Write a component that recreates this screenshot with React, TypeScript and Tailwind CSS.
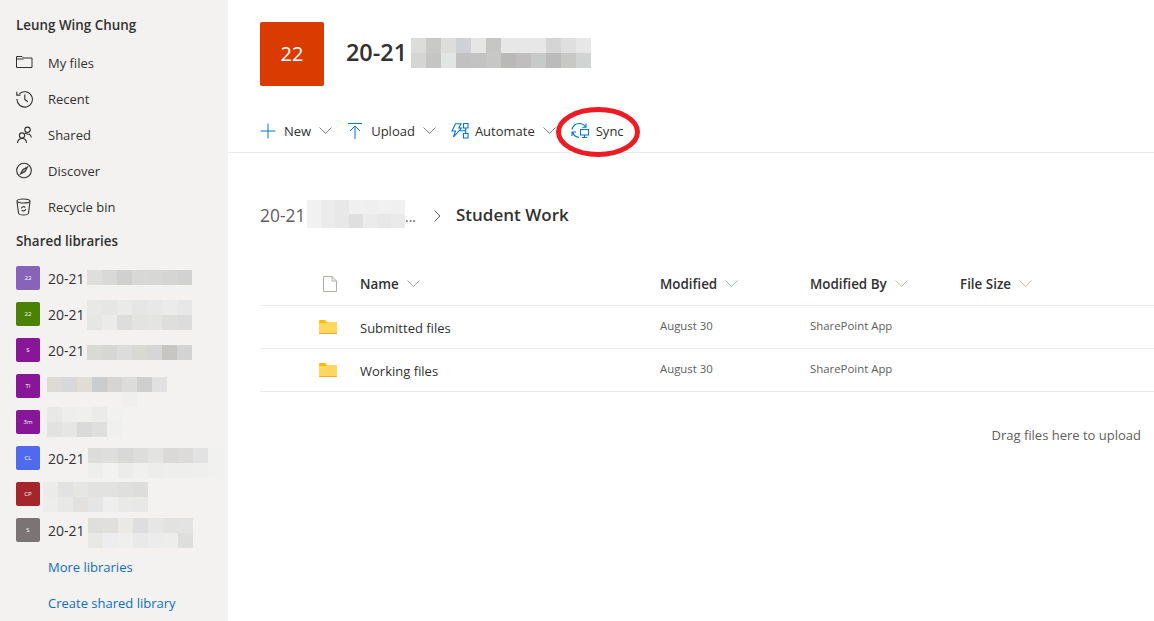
import React from "react";

function Mosaic({ rows, cell = "w-[15px] h-[15px]", className = "" }: { rows: (string | null)[][]; cell?: string; className?: string }) {
  return (
    <div className={"flex flex-col shrink-0 " + className}>
      {rows.map((r, i) => (
        <div key={i} className="flex">
          {r.map((c, j) => (
            <div key={j} className={cell} style={{ backgroundColor: c ?? "transparent" }} />
          ))}
        </div>
      ))}
    </div>
  );
}

const Chevron = ({ className = "" }: { className?: string }) => (
  <svg viewBox="0 0 13 7" className={"w-[13px] h-[7px] shrink-0 " + className} fill="none" stroke="currentColor" strokeWidth="1">
    <path d="M.5.5l6 6 6-6" />
  </svg>
);

const navIcon = "w-[18px] h-[18px] shrink-0 text-[#323130]";
const FolderOutline = () => (
  <svg viewBox="0 0 18 18" className={navIcon} fill="none" stroke="currentColor" strokeWidth="1">
    <path d="M.5 2.500v11h15.500v-9.500H7.500L6 2.500H.5zM.5 5h7" />
  </svg>
);
const Recent = () => (
  <svg viewBox="0 0 18 18" className={navIcon} fill="none" stroke="currentColor" strokeWidth="1.1">
    <path d="M3.400 3.800A7.700 7.700 0 1 1 1 9M.8 1.800v3.300h3.700M8.800 4.500v4.900l3 2.400" />
  </svg>
);
const Shared = () => (
  <svg viewBox="0 0 18 18" className={navIcon} fill="none" stroke="currentColor" strokeWidth="1.1">
    <circle cx="11.500" cy="3.800" r="2.700" />
    <circle cx="6" cy="9.500" r="2.600" />
    <path d="M1.500 17c0-2.700 2-4.500 4.500-4.500s4.500 1.800 4.500 4.500M8.800 6.800c.7.800 1.700 1.200 2.700 1.200 2 0 3.500 1.400 3.800 3.500" />
  </svg>
);
const Discover = () => (
  <svg viewBox="0 0 18 18" className={navIcon} fill="none" stroke="currentColor" strokeWidth="1.1">
    <circle cx="8" cy="8.500" r="7.300" />
    <path d="M11.500 5L9 9.600 4.500 12l2.500-4.600z" fill="currentColor" fillOpacity="0.35" />
  </svg>
);
const Bin = () => (
  <svg viewBox="0 0 18 18" className={navIcon} fill="none" stroke="currentColor" strokeWidth="1.1">
    <ellipse cx="7.500" cy="3" rx="6.500" ry="2" />
    <path d="M1 3.500l1.500 11.500c.2 1.200 1.500 2 5 2s4.800-.8 5-2L14 3.500M5.300 10.500a2.300 2.300 0 0 1 4-1M9.700 11a2.300 2.300 0 0 1-4 1.200" />
  </svg>
);

const blue = "text-[#0078d4]";
const Plus = () => (
  <svg viewBox="0 0 16 16" className={"w-4 h-4 shrink-0 " + blue} fill="none" stroke="currentColor" strokeWidth="1">
    <path d="M8 .5v15M.5 8h15" />
  </svg>
);
const UploadIcon = () => (
  <svg viewBox="0 0 14 16" className={"w-[14px] h-4 shrink-0 " + blue} fill="none" stroke="currentColor" strokeWidth="1">
    <path d="M0 .5h14M7 3v13M2 8l5-5 5 5" />
  </svg>
);
const AutomateIcon = () => (
  <svg viewBox="0 0 18 16" className={"w-[18px] h-4 shrink-0 " + blue} fill="none" stroke="currentColor" strokeWidth="1.1">
    <path d="M4.500.8h5.500L7.800 5H10.500L2.500 14 4.500 8H1zM12.500.5h4.500v4.500h-4.500zM12.500 10.500h4.500v4.500h-4.500zM14.700 5v5.500M8.500 7.700h6" />
  </svg>
);
const SyncIcon = () => (
  <svg viewBox="0 0 18 17" className={"w-[18px] h-[17px] shrink-0 " + blue} fill="none" stroke="currentColor" strokeWidth="1.1">
    <path d="M1 7.500C2 3.500 5 1.500 8.500 1.500c2.700 0 4.800 1.200 6 3.500M15 1.500v3.800h-3.800M1.500 10c.9 3 3.500 5 6.500 5.300M1 14v-4h4" />
    <path d="M9.500 7.500h8v5.500h-8zM13.500 13v2.300M11 15.500h5" />
  </svg>
);

const FolderIcon = () => (
  <svg viewBox="0 0 18 14" className="w-[18px] h-[14px] shrink-0 -mt-[2px]">
    <path d="M0 1a1 1 0 0 1 1-1h5l2 2h9a1 1 0 0 1 1 1v10H0z" fill="#ffb900" />
    <path d="M0 3h7l2-1h8a1 1 0 0 1 1 1v11H0z" fill="#ffd75e" />
    <path d="M0 13h18v1H0z" fill="#f2a93b" />
  </svg>
);
const FileIcon = () => (
  <svg viewBox="0 0 14 16" className="w-[14px] h-4 shrink-0" fill="#fff" stroke="#a9b1a6" strokeWidth="1">
    <path d="M.5.500h8.500l4.500 4.500v10.500H.5zM9 .5V5h4.500" />
  </svg>
);

const NavItem = ({ icon, label }: { icon: React.ReactNode; label: string }) => (
  <div className="flex items-center pl-4 h-9">
    <span className="w-8 flex shrink-0">{icon}</span>
    <span className="text-[13px] text-[#323130] pt-[2px]">{label}</span>
  </div>
);

const libs: { color: string; tile: string; prefix: boolean; mos: string; rows: (string | null)[][] }[] = [
  { color: "bg-[#8764b8]", tile: "22", prefix: true, mos: "mt-[10px]", rows: [["#dededc", "#d9d9d7", "#d0d0d0", "#d8d8d6", "#d7d7d5", "#d5d5d4", "#d2d2d2"]] },
  { color: "bg-[#498205]", tile: "22", prefix: true, mos: "mt-[4px]", rows: [["#e8e8e7", "#e6e6e4", "#eaeae9", "#e6e6e6", "#e8e8e8", "#ebebeb", "#e7e7e8"], ["#e6e6e5", "#ebebea", "#dddddd", "#e3e3e2", "#e4e4e3", "#dededd", "#dcdcdc"]] },
  { color: "bg-[#881798]", tile: "S", prefix: true, mos: "mt-[13px]", rows: [["#d9d9d6", "#d6d6d5", "#dcdcdd", "#d8d8d5", "#d7d6d6", "#c7c6c3", "#d3d3d3"]] },
  { color: "bg-[#881798]", tile: "TI", prefix: false, mos: "ml-[-1px] mt-[9px]", rows: [["#dddad7", "#d8d8da", "#e0ddd8", "#cbccce", "#d6d5d3", "#dcdcda", "#cfcfcf", "#e1e1e1"], [null, null, null, null, null, "#efefee", null, null]] },
  { color: "bg-[#881798]", tile: "3m", prefix: false, mos: "ml-[-1px] mt-[3px]", rows: [["#e8e8e7", "#eeeeed", "#efefee", "#ebebea", "#f1f1f0"], ["#e2e2e1", "#e6e6e5", "#dadadb", "#dfdfdd", "#f0f0ef"]] },
  { color: "bg-[#4f6bed]", tile: "CL", prefix: true, mos: "ml-[1px] mt-[8px]", rows: [["#dcdcda", "#dededc", "#d8d8d8", "#dddddb", "#e3e3e2", "#dad9d8", "#dcdbd9", "#e2e2e2", "#f1f1f0"], ["#eeeeed", "#f2f2f1", "#ececeb", "#f0f0ef", "#ededec", "#eeeeed", "#eeeeed", "#efefee", "#f1f1f0"]] },
  { color: "bg-[#a4262c]", tile: "CP", prefix: false, mos: "ml-[-5px] mt-[6px]", rows: [["#ebebea", "#e3e2e2", "#e6e6e5", "#e2e2e1", "#e2e2e1", "#dfdfde", "#dddddc"], ["#ededec", "#e8e8e7", "#e2e1e0", "#e5e5e6", "#eeeeee", "#e9e9e8", "#e8e8e8"]] },
  { color: "bg-[#7a7574]", tile: "S", prefix: true, mos: "ml-[1px] mt-[6px]", rows: [["#dededc", "#e0dfdd", "#ebe9e6", "#dedee0", "#e6e6e6", "#e2e2e1", "#e3e3e4"], ["#e8e8e7", "#edecee", "#efefee", "#e9e9ea", "#ececec", "#ededec", "#dededd"]] },
];

const Lib = ({ l }: { l: (typeof libs)[number] }) => (
  <div className="flex h-9 pl-4 items-start">
    <div className={"w-6 h-6 mt-[6px] rounded-[2px] flex items-center justify-center text-white text-[6px] shrink-0 " + l.color}>{l.tile}</div>
    <div className="w-2 shrink-0" />
    {l.prefix && <span className="w-[39px] shrink-0 text-[14px] leading-[38px] text-[#323130]">20-21</span>}
    <Mosaic rows={l.rows} className={l.mos} />
  </div>
);

const HeaderCell = ({ label, cls, chevronCls = "text-[#a6a6a6]" }: { label: string; cls: string; chevronCls?: string }) => (
  <div className={"flex items-center gap-2 " + cls}>
    <span className="text-[13.4px] font-semibold text-[#323130] pt-[2px]">{label}</span>
    <Chevron className={chevronCls} />
  </div>
);

const Row = ({ name }: { name: string }) => (
  <div className="flex items-center h-[43px] border-b border-[#edebe9] pt-[1px]">
    <div className="w-[100px] flex shrink-0 pl-[59px]">
      <FolderIcon />
    </div>
    <div className="w-[300px] text-[13px] text-[#323130] shrink-0 pt-[2px]">{name}</div>
    <div className="w-[150px] text-[11.4px] text-[#605e5c] shrink-0 -mt-[3px]">August 30</div>
    <div className="text-[11.4px] text-[#605e5c] -mt-[3px]">SharePoint App</div>
  </div>
);

export default function App() {
  return (
    <div className="flex h-[621px] w-[1154px] overflow-hidden bg-white" style={{ fontFamily: '"Open Sans","Noto Sans",sans-serif' }}>
      <aside className="w-[228px] shrink-0 bg-[#f3f2f1] flex flex-col overflow-hidden">
        <div className="h-[45px] pl-4 pt-[15px] text-[13.4px] leading-5 font-semibold text-[#323130]">Leung Wing Chung</div>
        <NavItem icon={<FolderOutline />} label="My files" />
        <NavItem icon={<Recent />} label="Recent" />
        <NavItem icon={<Shared />} label="Shared" />
        <NavItem icon={<Discover />} label="Discover" />
        <NavItem icon={<Bin />} label="Recycle bin" />
        <div className="h-[35px] pl-4 pt-[6px] text-[13.4px] leading-5 font-semibold text-[#323130]">Shared libraries</div>
        {libs.map((l, i) => (
          <Lib key={i} l={l} />
        ))}
        <div className="h-9 pl-12 pt-[3px] flex items-center text-[13px] text-[#106ebe]">More libraries</div>
        <div className="h-9 pl-12 pt-[3px] flex items-center text-[13px] text-[#106ebe]">Create shared library</div>
      </aside>

      <main className="flex-1 min-w-0 flex flex-col">
        <div className="h-[108px] pl-8 pt-[22px] flex items-start shrink-0">
          <div className="w-16 h-16 rounded-[2px] bg-[#da3b01] text-white text-[20px] flex items-center justify-center shrink-0">22</div>
          <div className="ml-[22px] mt-[14px] w-[60px] whitespace-nowrap text-[23.4px] leading-8 font-semibold text-[#323130]">20-21</div>
          <Mosaic
            className="ml-[5px] mt-[16px]"
            rows={[
              ["#dcdcdb", "#c9c9c7", "#dddddc", "#d0d1d4", "#e6e6e6", "#c6c6c4", "#e7e7e7", "#e7e7e7", "#e7e7e7", "#d5d5d5", "#dfdfdf", "#e7e7e7"],
              ["#d5d5d5", "#c5c5c3", "#e3e5e4", "#c1c1c1", "#c3c3c3", "#c7c7c5", "#b9b9b8", "#bfbdbd", "#c8cac9", "#bbbbbb", "#c8c8c7", "#d2d4d3"],
            ]}
          />
        </div>

        <div className="relative h-[45px] shrink-0 border-b border-[#edebe9] pl-8 flex items-center text-[13px] text-[#323130]">
          <div className="flex items-center pt-[1px]">
            <Plus />
            <span className="ml-2 pt-[2px]">New</span>
            <Chevron className="ml-2 text-[#8a8886]" />
            <div className="ml-[16px]"><UploadIcon /></div>
            <span className="ml-[9px] pt-[2px]">Upload</span>
            <Chevron className="ml-2 text-[#8a8886]" />
            <div className="ml-[15px]"><AutomateIcon /></div>
            <span className="ml-[6px] pt-[2px]">Automate</span>
            <Chevron className="ml-2 text-[#8a8886]" />
            <div className="ml-[15px]"><SyncIcon /></div>
            <span className="ml-[7px] pt-[2px]">Sync</span>
          </div>
          <svg viewBox="0 0 84 50" className="absolute left-[328px] top-[-1px] w-[84px] h-[50px]" fill="none">
            <ellipse cx="42" cy="25" rx="39.500" ry="22.500" stroke="#ed1c24" strokeWidth="5" />
          </svg>
        </div>

        <div className="h-[81px] shrink-0 pl-8 pt-[46px] flex items-start">
          <span className="w-[47px] shrink-0 text-[17.4px] leading-[32px] text-[#605e5c]">20-21</span>
          <Mosaic
            className="mt-[1px]"
            cell="w-[14px] h-[14px]"
            rows={[
              ["#f1f1f1", "#ebebeb", "#e8e8e8", "#f0f0f0", "#efefef", "#f1f1f1", "#f0f0f0"],
              ["#f1f1f1", "#ebebeb", "#e8e8e8", "#dfdfdf", "#ebebeb", "#e7e7e7", "#eaeaea"],
            ]}
          />
          <span className="w-[13px] text-[14px] leading-[36px] text-[#605e5c]">...</span>
          <svg viewBox="0 0 7 12" className="w-[7px] h-3 ml-[16px] mt-[11px] text-[#605e5c] shrink-0" fill="none" stroke="currentColor" strokeWidth="1">
            <path d="M.5.500l5.500 5.500-5.500 5.500" />
          </svg>
          <span className="ml-[15px] text-[17px] leading-[32px] font-semibold text-[#323130]">Student Work</span>
        </div>

        <div className="ml-8">
          <div className="flex items-center h-[44px] mt-[28px] border-b border-[#edebe9]">
            <div className="w-[100px] pl-[63px] flex shrink-0"><FileIcon /></div>
            <HeaderCell label="Name" cls="w-[300px] shrink-0" />
            <HeaderCell label="Modified" cls="w-[150px] shrink-0" chevronCls="text-[#9fb8d0]" />
            <HeaderCell label="Modified By" cls="w-[150px] shrink-0" chevronCls="text-[#c8b8a8]" />
            <HeaderCell label="File Size" cls="shrink-0" chevronCls="text-[#c8b8a8]" />
          </div>
          <Row name="Submitted files" />
          <Row name="Working files" />
          <div className="pr-[13px] pt-[34px] text-right text-[13px] text-[#605e5c]">Drag files here to upload</div>
        </div>
      </main>
    </div>
  );
}
